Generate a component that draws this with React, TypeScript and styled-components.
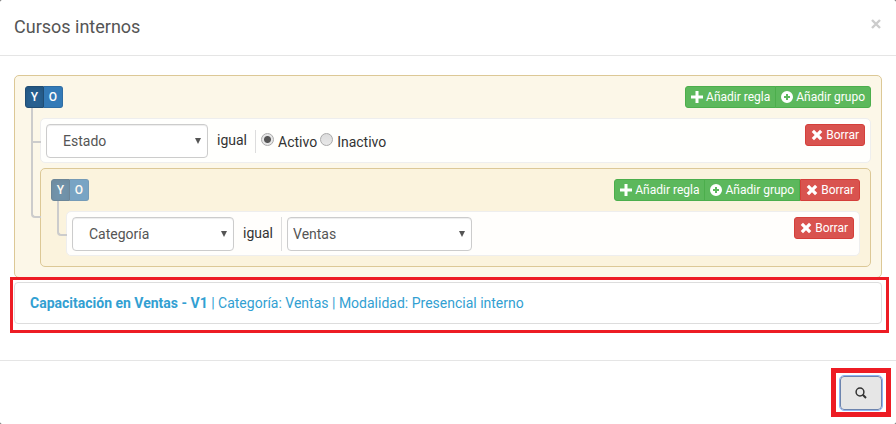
import React, { useState } from "react";
import styled, { createGlobalStyle, css } from "styled-components";

const GlobalStyle = createGlobalStyle`
  *, *::before, *::after { box-sizing: border-box; }
  html, body, #root { height: 100%; }
  body {
    margin: 0;
    background: #555;
    color: #333;
    font: 14px/20px Roboto, "Liberation Sans", sans-serif;
  }
  button, select, input { font-family: inherit; }
`;

const Modal = styled.section`
  display: flex;
  flex-direction: column;
  min-height: 100%;
  background: #fff;
  border-radius: 2px;
`;

const ModalHeader = styled.header`
  display: flex;
  justify-content: space-between;
  align-items: flex-start;
  padding: 14px 14px 15px;
  border-bottom: 1px solid #e5e5e5;
`;

const Title = styled.h4`
  margin: 0;
  color: #555;
  font-size: 18px;
  font-weight: 400;
  line-height: 26px;
`;

const CloseButton = styled.button`
  display: flex;
  padding: 5px 1px;
  border: 0;
  background: none;
  color: #ccc;
  cursor: pointer;
`;

const ModalBody = styled.div`
  flex: 1;
  display: flex;
  flex-direction: column;
  gap: 4px;
  padding: 19px 14px;
`;

const ModalFooter = styled.footer`
  display: flex;
  justify-content: flex-end;
  padding: 15px 14px 14px;
  border-top: 1px solid #e5e5e5;
`;

const connector = css`
  position: relative;
  &::before,
  &::after {
    content: "";
    position: absolute;
    left: -10px;
    width: 10px;
    height: calc(50% + 4px);
    border: 0 solid #ccc;
  }
  &::before {
    top: -4px;
    border-width: 0 0 2px 2px;
  }
  &::after {
    top: 50%;
    border-left-width: 2px;
  }
  &:first-child::before {
    top: -11px;
    height: calc(50% + 13px);
  }
  &:last-child::before {
    border-bottom-left-radius: 4px;
  }
  &:last-child::after {
    display: none;
  }
`;

const Group = styled.div<{ $nested?: boolean }>`
  display: flex;
  flex-direction: column;
  gap: 10px;
  padding: 10px;
  border: 1px solid #dcc896;
  border-radius: 5px;
  background: rgba(250, 240, 210, 0.5);
  ${(p) => p.$nested && connector}
`;

const GroupHeader = styled.div`
  display: flex;
  justify-content: space-between;
`;

const Rules = styled.div`
  display: flex;
  flex-direction: column;
  gap: 5px;
  padding-left: 15px;
`;

const Rule = styled.div`
  display: flex;
  align-items: flex-start;
  padding: 5px 5px 4px;
  border: 1px solid #eee;
  border-radius: 5px;
  background: rgba(255, 255, 255, 0.9);
  ${connector}
`;

const ButtonGroup = styled.div`
  display: flex;
`;

const tones = {
  success: ["#5cb85c", "#4cae4c"],
  danger: ["#d9534f", "#d43f3a"],
};

const ActionButton = styled.button<{ $tone: keyof typeof tones }>`
  display: flex;
  align-items: center;
  gap: 3px;
  height: 22px;
  padding: 0 5px;
  border: 1px solid ${(p) => tones[p.$tone][1]};
  border-radius: 3px;
  background: ${(p) => tones[p.$tone][0]};
  color: #fff;
  font-size: 12px;
  line-height: 18px;
  white-space: nowrap;
  cursor: pointer;
  ${ButtonGroup} & + & { margin-left: -1px; }
  ${ButtonGroup} &:not(:first-child) {
    border-top-left-radius: 0;
    border-bottom-left-radius: 0;
  }
  ${ButtonGroup} &:not(:last-child) {
    border-top-right-radius: 0;
    border-bottom-right-radius: 0;
  }
`;

const RuleActions = styled.div`
  margin-left: auto;
`;

const ConditionSwitch = styled.div<{ $readonly?: boolean }>`
  display: flex;
  opacity: ${(p) => (p.$readonly ? 0.65 : 1)};
`;

const Condition = styled.button<{ $active?: boolean }>`
  width: 19px;
  height: 22px;
  padding: 0;
  border: 1px solid ${(p) => (p.$active ? "#204d74" : "#2e6da4")};
  border-radius: ${(p) => (p.$active ? "3px 0 0 3px" : "0 3px 3px 0")};
  border-left-width: ${(p) => (p.$active ? "1px" : "0")};
  background: ${(p) => (p.$active ? "#286090" : "#337ab7")};
  box-shadow: ${(p) => (p.$active ? "inset 0 3px 5px rgba(0, 0, 0, 0.125)" : "none")};
  color: #fff;
  font-size: 12px;
  font-weight: 500;
  line-height: 18px;
  cursor: pointer;
`;

const SelectBox = styled.div<{ $wide?: boolean }>`
  position: relative;
  width: ${(p) => (p.$wide ? "185px" : "162px")};
  svg {
    position: absolute;
    right: 7px;
    top: 14px;
    pointer-events: none;
  }
`;

const Select = styled.select<{ $inset?: boolean }>`
  appearance: none;
  display: block;
  width: 100%;
  height: 34px;
  padding: 0 20px 0 ${(p) => (p.$inset ? "16px" : "5px")};
  border: 1px solid #ccc;
  border-radius: 4px;
  background: #fff;
  box-shadow: inset 0 1px 1px rgba(0, 0, 0, 0.075);
  color: #555;
  font-size: 14px;
`;

const Operator = styled.span`
  padding: 6px 8px 6px 9px;
`;

const Value = styled.div<{ $choices?: boolean }>`
  display: flex;
  align-items: center;
  padding-left: 5px;
  border-left: 1px solid #ddd;
  ${(p) => p.$choices && "margin-top: 6px; height: 23px;"}
`;

const Choice = styled.label`
  display: flex;
  align-items: center;
  gap: 4px;
  padding-right: 3px;
`;

const Radio = styled.input`
  appearance: none;
  width: 13px;
  height: 13px;
  margin: 0 0 4px;
  border: 1px solid #aaa;
  border-radius: 50%;
  background: linear-gradient(#dcdcdc, #e8e8e8);
  &:checked {
    background: radial-gradient(circle, #555 0 3px, #e6e6e6 4px);
  }
`;

const ChoiceText = styled.span`
  padding-top: 1px;
`;

const Marked = styled.div`
  position: relative;
`;

const Marker = styled.div<{ $button?: boolean }>`
  position: absolute;
  inset: ${(p) => (p.$button ? "-8px -9px -7px" : "-5px -7px -9px -4px")};
  border: ${(p) => (p.$button ? "5px" : "3px")} solid #ed1c24;
  pointer-events: none;
`;

const Result = styled.div`
  padding: 10px 15px;
  border: 1px solid #ddd;
  border-radius: 4px;
  background: #fff;
`;

const ResultLink = styled.a`
  color: #32a0d2;
  text-decoration: none;
  strong { font-weight: 700; }
`;

const SearchButton = styled.button`
  display: flex;
  align-items: center;
  justify-content: center;
  width: 42px;
  height: 34px;
  border: 1px solid #6d84ae;
  border-radius: 4px;
  outline: 1px solid #8fb4f5;
  background: #e6e6e6;
  color: #333;
  cursor: pointer;
`;

const PlusIcon = () => (
  <svg width="12" height="12" viewBox="0 0 12 12" fill="currentColor" aria-hidden>
    <path d="M4.5 0h3v4.5H12v3H7.5V12h-3V7.5H0v-3h4.5z" />
  </svg>
);

const PlusCircleIcon = () => (
  <svg width="12" height="12" viewBox="0 0 12 12" aria-hidden>
    <path
      fill="currentColor"
      fillRule="evenodd"
      d="M6 0a6 6 0 1 0 0 12A6 6 0 0 0 6 0zM5 3h2v2h2v2H7v2H5V7H3V5h2z"
    />
  </svg>
);

const CrossIcon = () => (
  <svg width="12" height="12" viewBox="0 0 12 12" fill="currentColor" aria-hidden>
    <path d="M3 .7 6 3.7 9 .7 11.3 3 8.3 6l3 3L9 11.3l-3-3-3 3L.7 9l3-3-3-3z" />
  </svg>
);

const CloseIcon = () => (
  <svg width="10" height="10" viewBox="0 0 10 10" stroke="currentColor" strokeWidth="2.4" aria-hidden>
    <path d="M1 1l8 8M9 1L1 9" />
  </svg>
);

const SearchIcon = () => (
  <svg width="12" height="12" viewBox="0 0 12 12" fill="none" stroke="currentColor" aria-hidden>
    <circle cx="5" cy="5" r="3.9" strokeWidth="1.5" />
    <path d="M7.8 7.8l3.2 3.2" strokeWidth="2" />
  </svg>
);

const Caret = () => (
  <svg width="6" height="6" viewBox="0 0 6 6" fill="#555" aria-hidden>
    <path d="M0 0h6L3 6z" />
  </svg>
);

const AddButtons = () => (
  <>
    <ActionButton $tone="success">
      <PlusIcon />
      Añadir regla
    </ActionButton>
    <ActionButton $tone="success">
      <PlusCircleIcon />
      Añadir grupo
    </ActionButton>
  </>
);

const DeleteButton = () => (
  <ActionButton $tone="danger">
    <CrossIcon />
    Borrar
  </ActionButton>
);

const Conditions = ({ readonly }: { readonly?: boolean }) => (
  <ConditionSwitch $readonly={readonly}>
    <Condition $active aria-pressed="true">Y</Condition>
    <Condition aria-pressed="false">O</Condition>
  </ConditionSwitch>
);

type PickerProps = { label: string; options: string[]; initial: string; wide?: boolean };

const Picker = ({ label, options, initial, wide }: PickerProps) => (
  <SelectBox $wide={wide}>
    <Select $inset={!wide} aria-label={label} defaultValue={initial}>
      {options.map((o) => (
        <option key={o}>{o}</option>
      ))}
    </Select>
    <Caret />
  </SelectBox>
);

const fields = ["Estado", "Categoría"];

export default function App() {
  const [status, setStatus] = useState("Activo");
  return (
    <>
      <GlobalStyle />
      <Modal role="dialog" aria-labelledby="modal-title">
        <ModalHeader>
          <Title id="modal-title">Cursos internos</Title>
          <CloseButton aria-label="Cerrar">
            <CloseIcon />
          </CloseButton>
        </ModalHeader>
        <ModalBody>
          <Group>
            <GroupHeader>
              <Conditions />
              <ButtonGroup>
                <AddButtons />
              </ButtonGroup>
            </GroupHeader>
            <Rules>
              <Rule>
                <Picker label="Campo" options={fields} initial="Estado" />
                <Operator>igual</Operator>
                <Value $choices>
                  {["Activo", "Inactivo"].map((s) => (
                    <Choice key={s}>
                      <Radio
                        type="radio"
                        name="status"
                        checked={status === s}
                        onChange={() => setStatus(s)}
                      />
                      <ChoiceText>{s}</ChoiceText>
                    </Choice>
                  ))}
                </Value>
                <RuleActions>
                  <DeleteButton />
                </RuleActions>
              </Rule>
              <Group $nested>
                <GroupHeader>
                  <Conditions readonly />
                  <ButtonGroup>
                    <AddButtons />
                    <DeleteButton />
                  </ButtonGroup>
                </GroupHeader>
                <Rules>
                  <Rule>
                    <Picker label="Campo" options={fields} initial="Categoría" />
                    <Operator>igual</Operator>
                    <Value>
                      <Picker label="Valor" options={["Ventas"]} initial="Ventas" wide />
                    </Value>
                    <RuleActions>
                      <DeleteButton />
                    </RuleActions>
                  </Rule>
                </Rules>
              </Group>
            </Rules>
          </Group>
          <Marked>
            <Result>
              <ResultLink href="#">
                <strong>Capacitación en Ventas - V1</strong> | Categoría: Ventas | Modalidad:
                Presencial interno
              </ResultLink>
            </Result>
            <Marker />
          </Marked>
        </ModalBody>
        <ModalFooter>
          <Marked>
            <SearchButton aria-label="Buscar">
              <SearchIcon />
            </SearchButton>
            <Marker $button />
          </Marked>
        </ModalFooter>
      </Modal>
    </>
  );
}
